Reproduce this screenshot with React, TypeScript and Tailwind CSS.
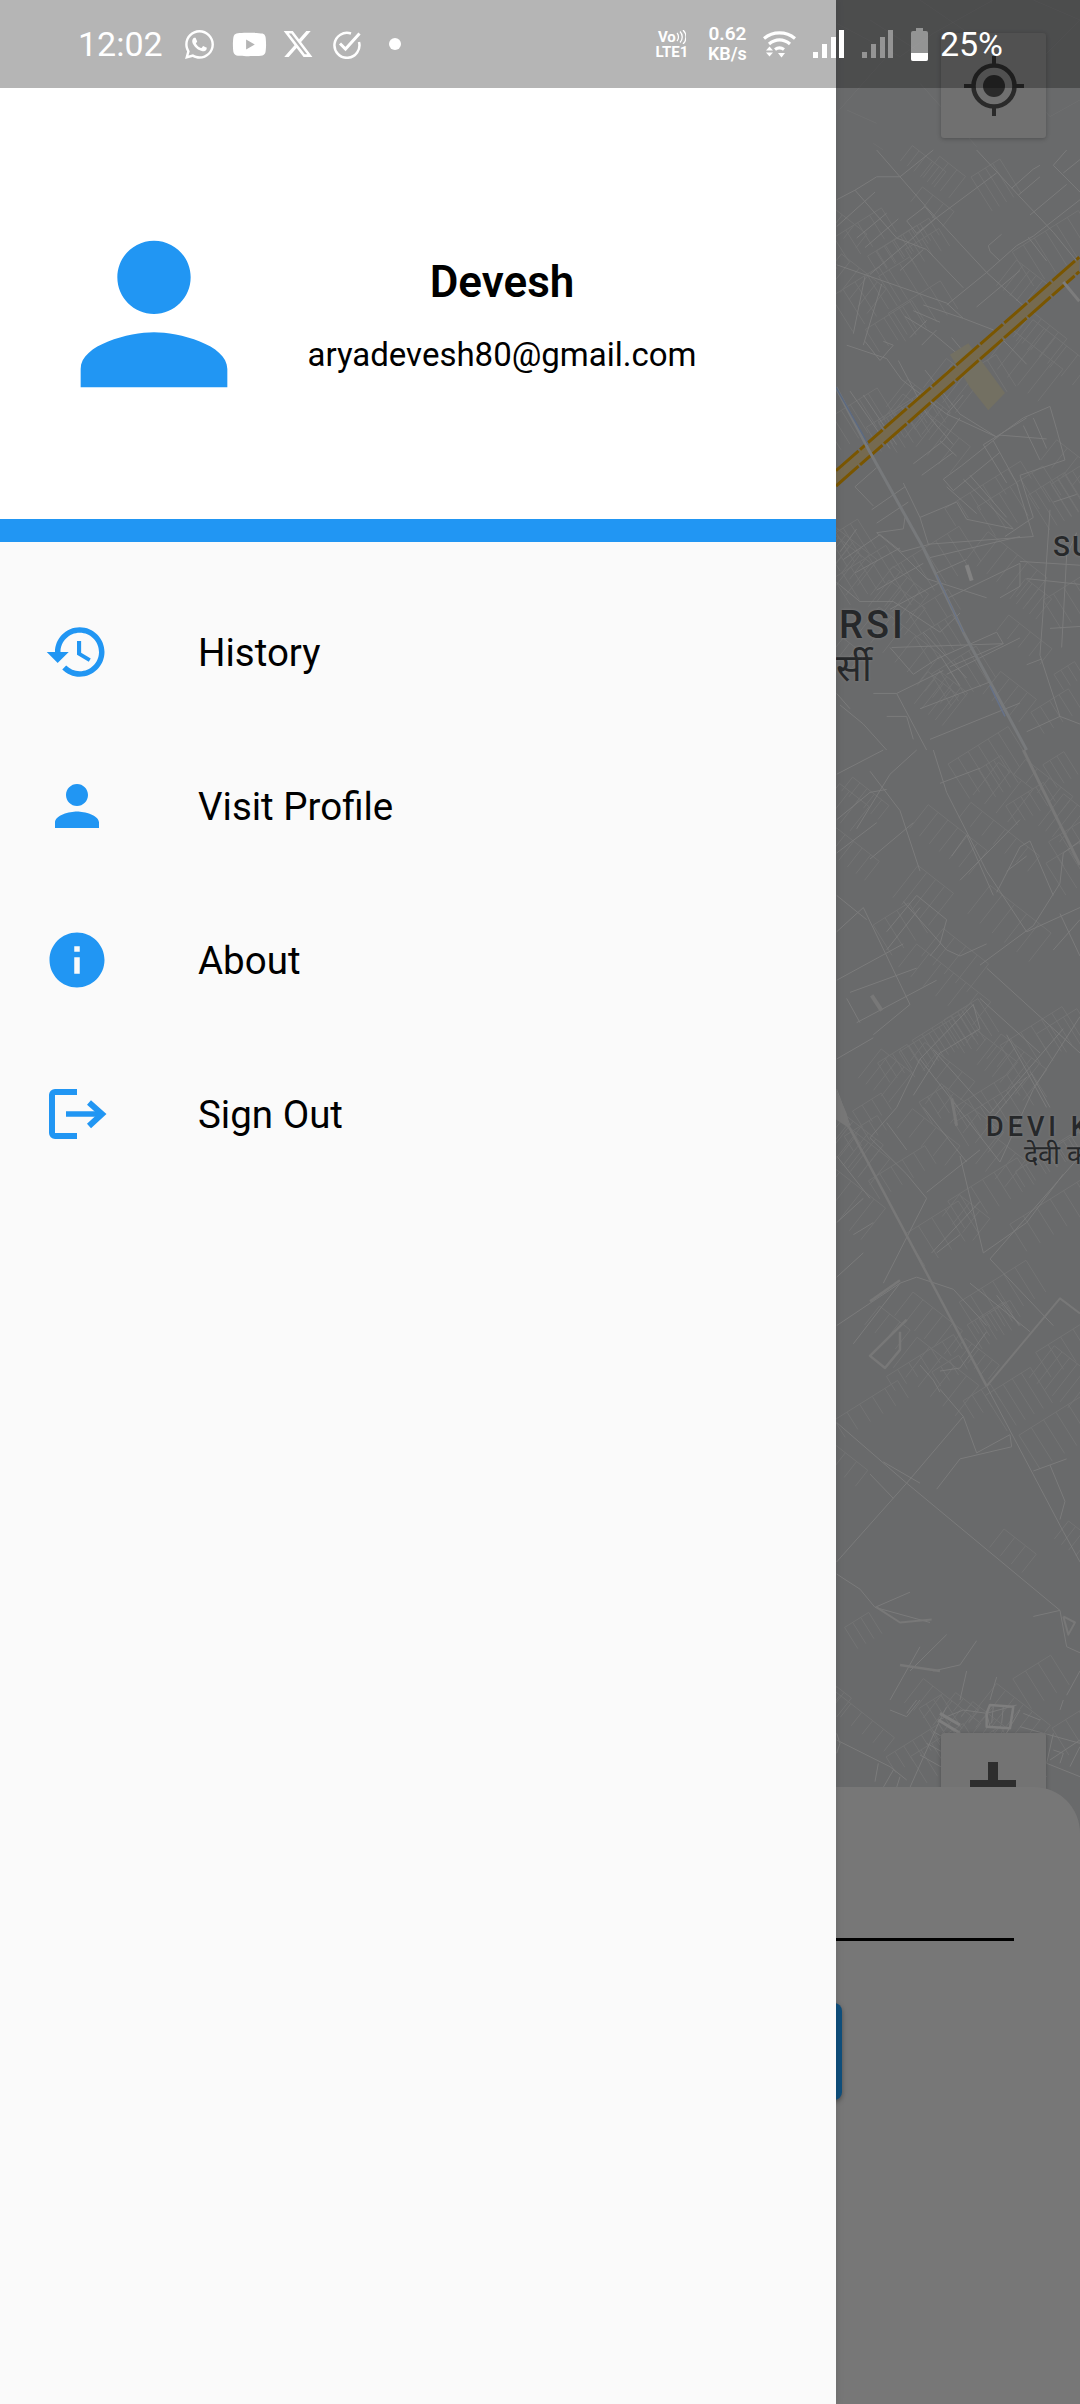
import { FaWhatsapp, FaYoutube } from "react-icons/fa";
import { FaXTwitter } from "react-icons/fa6";

const thinTop = [
  "170,0 240,70 320,150 420,245 500,320 620,415",
  "50,130 105,105 170,70 240,70 340,0",
  "105,105 230,230 320,260 430,360",
  "50,200 165,110",
  "110,230 200,165",
  "135,255 235,180",
  "150,325 265,240 345,180 530,60",
  "240,315 310,260",
  "260,185 315,148 345,180 290,218 260,185",
  "470,0 595,118 700,215 770,290",
  "575,100 640,50 660,40",
  "630,170 740,90",
  "595,118 660,70",
  "500,320 590,250 640,225 780,130",
  "505,250 545,220",
  "505,250 510,265 540,290",
  "625,228 680,290",
  "380,405 500,320",
  "470,410 600,315",
  "50,300 380,400 430,440 520,470 620,560",
  "700,40 740,0",
  "700,40 780,110",
  "730,60 780,25",
  "100,480 135,330",
  "130,510 185,350",
  "80,510 200,545 245,600 380,690 530,750",
  "255,435 340,480 450,560",
  "310,405 430,440",
  "280,420 360,450",
  "270,490 320,445",
  "305,510 350,470",
  "135,500 180,550 220,510 190,500",
  "235,550 320,690 400,770",
  "130,640 230,770",
  "315,575 420,690 530,750",
  "90,630 210,780",
  "395,490 530,630",
  "380,690 430,640",
  "280,820 370,760 420,700",
  "305,850 400,790",
  "360,760 410,800",
  "530,750 610,700 690,670 710,730 735,810 600,850",
  "600,850 640,960 555,1010",
  "490,770 620,700",
  "520,760 590,870 640,1010",
  "490,770 560,870",
  "610,720 660,810",
  "640,700 680,780",
  "425,825 540,745 680,755",
  "370,860 425,825",
  "370,860 400,890 540,790",
  "430,860 580,990",
  "450,850 560,960",
  "380,880 470,950",
  "250,870 300,960 410,920 440,965 580,990",
  "300,960 325,1030 640,1010",
  "155,940 255,880",
  "170,975 265,920",
  "105,880 170,830",
  "105,880 160,930",
  "170,1000 250,990 255,960",
  "170,1000 240,1050 320,1120 500,1170",
  "60,1050 110,990",
  "70,1070 180,1005 245,1050 330,1030",
  "105,1105 240,1040",
  "170,1150 310,1080",
  "210,1200 360,1130",
  "50,1130 120,1180 220,1180 360,1260 420,1210",
  "330,1065 600,1010",
  "350,1105 440,1070",
  "385,1170 600,1080",
  "600,1080 600,1140 540,1170",
  "600,1075 780,1085",
  "620,1120 780,1135",
  "700,920 770,900",
  "690,940 670,1200 660,1320 720,1480 780,1500",
  "770,1000 740,1060 725,1300",
  "690,1250 780,1245",
  "620,1345 665,1330",
  "215,1300 550,1290",
  "210,1300 280,1370 350,1330 530,1260 550,1290 390,1350",
  "310,1260 440,1380",
  "360,1320 420,1400",
  "380,1370 600,1275",
  "160,1420 230,1420 320,1568",
  "230,1420 370,1360",
  "300,1460 510,1390",
  "330,1540 600,1445",
  "60,1450 130,1500 200,1568",
  "200,1480 260,1480 280,1540",
  "620,1520 720,1480",
  "50,1420 90,1460",
];
const thinMid = [
  "50,40 190,0",
  "150,35 240,100 300,200",
  "50,115 150,70 200,65",
  "110,130 210,40 290,0",
  "50,170 170,120",
  "150,180 280,120",
  "340,0 380,70 500,200 620,300",
  "360,55 480,30",
  "395,175 440,140 520,240",
  "420,215 600,115",
  "560,200 620,175",
  "480,355 640,290 720,220 730,170 780,150",
  "530,235 600,160 630,150 700,240",
  "620,300 780,260",
  "700,330 780,280",
  "720,270 780,340",
  "150,640 230,590 300,510 460,420 480,460 360,500 280,570",
  "200,300 290,240 380,280 360,320 330,340",
  "200,330 300,260",
  "250,250 380,330 420,340 500,320",
  "50,300 130,260 270,420 160,470",
  "50,380 250,320",
  "90,400 290,360",
  "110,450 350,380",
  "50,510 160,475",
  "50,240 140,280",
  "50,560 90,620",
  "50,670 150,740",
  "80,410 120,450",
  "300,510 540,680 640,560 780,440",
  "340,495 510,600 730,460",
  "480,410 600,470 660,500",
  "500,360 780,500",
  "560,470 680,590",
  "630,530 690,590",
  "500,620 620,540",
  "150,640 260,700 320,740",
  "200,615 260,660",
  "310,590 440,680",
  "320,730 480,660",
  "420,670 490,830 620,780 730,700",
  "350,830 420,800",
  "335,830 480,745",
  "510,840 780,670",
  "510,840 700,950",
  "450,880 630,960",
  "530,900 600,950",
  "50,780 130,740",
  "100,800 160,780",
  "50,870 130,830",
  "50,950 240,880 290,870 400,890 500,950",
  "240,880 100,980",
  "190,880 320,740",
  "50,1110 260,1210 720,1420",
  "50,1340 260,1210 430,1100",
  "430,1100 470,1160 570,1130 575,1150 420,1170 350,1220",
  "500,1050 730,1290 780,1340",
  "190,1175 300,1210",
  "150,1195 220,1235",
  "640,1190 740,1170",
  "690,1180 735,1240 720,1270",
  "300,1015 340,1040 360,1060",
  "360,1025 420,1020 500,960",
  "360,1055 430,1100",
  "50,1360 120,1385 165,1415 330,1440",
  "165,1415 270,1390",
  "210,1568 300,1480",
  "270,1520 380,1460",
  "340,1520 420,1510 470,1470",
  "420,1568 440,1520",
  "510,1568 530,1530",
  "640,1430 720,1420 740,1480 780,1490",
  "740,1560 780,1520",
];
const thinBottom = [
  "50,100 60,130 50,160",
  "50,120 210,200 260,240",
  "175,190 165,245",
  "220,210 190,262",
  "240,230 230,262",
  "270,262 360,60 380,20",
  "300,165 380,210",
  "320,130 410,180",
  "340,95 420,140",
  "355,60 430,30 500,40 590,15",
  "210,30 260,50 300,0",
  "260,40 290,0",
  "500,40 510,80 570,85 580,30",
  "520,20 515,70",
  "550,20 545,70",
  "600,30 530,150",
  "600,80 780,130",
  "700,100 680,190 780,230",
  "700,150 730,160 720,190",
  "690,180 780,120",
  "750,200 780,140",
  "720,30 730,0",
  "610,40 660,60",
  "370,110 470,150",
  "400,190 500,230",
  "600,200 680,230",
  "770,340 780,360",
];

// Small street blocks: a spine with a ladder of side streets, as the dense map tiles have.
const blockLines: string[] = (() => {
  const out: string[] = [];
  let seed = 17;
  const rnd = () => {
    seed = (seed * 16807) % 2147483647;
    return seed / 2147483647;
  };
  for (let i = 0; i < 150; i++) {
    const cx = 836 + rnd() * 244;
    const cy = 150 + rnd() * 1620;
    if (cy > 1400 && cy < 1650 && rnd() < 0.8) continue;
    const flip = rnd() > 0.5;
    const a = ((flip ? -32 : 38) * Math.PI) / 180;
    const ux = Math.cos(a);
    const uy = Math.sin(a);
    const n = 3 + Math.floor(rnd() * 4);
    const gap = 8 + rnd() * 8;
    const len = 16 + rnd() * 26;
    const s = n * gap;
    out.push(`${cx - ux * s * 0.5},${cy - uy * s * 0.5} ${cx + ux * s * 0.5},${cy + uy * s * 0.5}`);
    for (let k = 0; k <= n; k++) {
      const px = cx + ux * (k - n / 2) * gap;
      const py = cy + uy * (k - n / 2) * gap;
      out.push(`${px},${py} ${px - uy * len},${py + ux * len}`);
    }
  }
  return out;
})();

function MapLines() {
  return (
    <svg className="absolute left-0 top-0" width="244" height="1800" viewBox="836 0 244 1800" fill="none">
      <g stroke="#7c7c7c" strokeWidth="1" opacity="0.55">
        {blockLines.map((p, i) => <polyline key={i} points={p} />)}
      </g>
      <g stroke="#808080" strokeWidth="1" opacity="0.8">
        <g transform="translate(820 150) scale(0.3333 0.3827)">
          {thinTop.map((p) => <polyline key={p} points={p} vectorEffect="non-scaling-stroke" />)}
        </g>
        <g transform="translate(820 750) scale(0.3333 0.6059)">
          {thinMid.map((p) => <polyline key={p} points={p} vectorEffect="non-scaling-stroke" />)}
        </g>
        <g transform="translate(820 1700) scale(0.3333)">
          {thinBottom.map((p) => <polyline key={p} points={p} vectorEffect="non-scaling-stroke" />)}
        </g>
        <g transform="translate(600 0) scale(0.3333)">
          <polyline points="710,70 900,170 1000,100 1180,0" />
          <polyline points="960,0 1180,150 1300,210" />
          <polyline points="860,170 700,350" />
          <polyline points="810,60 950,150" />
          <polyline points="740,330 830,370" />
          <polyline points="960,250 1130,440" />
          <polyline points="1330,170 1440,60" />
          <polyline points="1260,300 1290,280 1350,350 1440,300" />
          <polyline points="1300,0 1440,60" />
          <polyline points="820,430 850,450" />
        </g>
      </g>
      <g transform="translate(820 150) scale(0.3333 0.3827)" strokeLinejoin="round">
        <polygon points="390,535 445,505 555,635 505,680 450,620" fill="#737062" stroke="none" />
        <polygon points="48,838 778,280 778,318 48,878" fill="#756a50" />
        <polyline points="48,838 778,280" stroke="#7a5600" strokeWidth="3" strokeDasharray="30 2" vectorEffect="non-scaling-stroke" />
        <polyline points="48,878 778,318" stroke="#7a5600" strokeWidth="3" strokeDasharray="30 2" vectorEffect="non-scaling-stroke" />
        <polyline points="730,345 778,395" stroke="#7c7c7c" strokeWidth="3" vectorEffect="non-scaling-stroke" />
        <polyline points="48,620 150,790 310,1040 430,1260 620,1568" stroke="#77797b" strokeWidth="3" vectorEffect="non-scaling-stroke" />
        <polyline points="48,620 145,770" stroke="#5c6a82" strokeWidth="1.5" vectorEffect="non-scaling-stroke" />
        <polyline points="350,1110 430,1260" stroke="#66728a" strokeWidth="1" vectorEffect="non-scaling-stroke" />
        <polyline points="510,1400 555,1480" stroke="#66728a" strokeWidth="1.5" vectorEffect="non-scaling-stroke" />
        <polyline points="440,1085 455,1125" stroke="#828282" strokeWidth="4" vectorEffect="non-scaling-stroke" />
      </g>
      <g transform="translate(820 750) scale(0.3333 0.6059)" stroke="#787878" strokeLinejoin="round">
        <polyline points="610,0 780,190" strokeWidth="3" vectorEffect="non-scaling-stroke" />
        <polyline points="48,590 90,625 500,1050" strokeWidth="2.5" vectorEffect="non-scaling-stroke" />
        <polyline points="500,1050 720,905 780,930" strokeWidth="2" vectorEffect="non-scaling-stroke" />
        <polyline points="150,910 240,875" strokeWidth="2.5" vectorEffect="non-scaling-stroke" />
        <polyline points="260,940 150,1000 195,1020 240,990 240,960" strokeWidth="2.5" vectorEffect="non-scaling-stroke" />
        <polyline points="155,405 185,430" strokeWidth="4" vectorEffect="non-scaling-stroke" />
        <polyline points="395,575 410,620" strokeWidth="3" vectorEffect="non-scaling-stroke" />
        <polyline points="170,1415 240,1440 335,1435" strokeWidth="2" vectorEffect="non-scaling-stroke" />
        <polyline points="240,1510 360,1520" strokeWidth="2.5" vectorEffect="non-scaling-stroke" />
        <polyline points="730,1430 765,1440 745,1460 730,1430" strokeWidth="2" vectorEffect="non-scaling-stroke" />
        <polygon points="48,560 48,610 90,625 80,600" fill="#777777" stroke="none" />
      </g>
      <g transform="translate(820 1700) scale(0.3333)" stroke="#7e7e7e" strokeLinejoin="round" fill="none">
        <polyline points="355,60 420,100" strokeWidth="3" vectorEffect="non-scaling-stroke" />
        <polyline points="360,40 420,75" strokeWidth="3" vectorEffect="non-scaling-stroke" />
        <polyline points="500,40 500,80 570,85 580,20 510,15 500,40" strokeWidth="2.5" vectorEffect="non-scaling-stroke" />
      </g>
    </svg>
  );
}

function MaterialIcon({ d }: { d: string }) {
  return (
    <svg width="66" height="66" viewBox="0 0 24 24" fill="#2196f3">
      <path d={d} />
    </svg>
  );
}

const historyPath =
  "M13 3c-4.97 0-9 4.03-9 9H1l3.89 3.89.07.14L9 12H6c0-3.87 3.13-7 7-7s7 3.13 7 7-3.13 7-7 7c-1.93 0-3.68-.79-4.94-2.06l-1.42 1.42C8.27 19.99 10.51 21 13 21c4.97 0 9-4.03 9-9s-4.03-9-9-9zm-1 5v5l4.28 2.54.72-1.21-3.5-2.08V8H12z";
const personPath =
  "M12 12c2.21 0 4-1.79 4-4s-1.79-4-4-4-4 1.79-4 4 1.79 4 4 4zm0 2c-2.67 0-8 1.34-8 4v2h16v-2c0-2.66-5.33-4-8-4z";
const infoPath =
  "M12 2C6.48 2 2 6.48 2 12s4.48 10 10 10 10-4.48 10-10S17.52 2 12 2zm1 15h-2v-6h2v6zm0-8h-2V7h2v2z";

function SignOutIcon() {
  return (
    <svg width="66" height="66" viewBox="0 0 66 66" fill="none" stroke="#2196f3">
      <path d="M33 11H11a3 3 0 0 0-3 3V52a3 3 0 0 0 3 3H33" strokeWidth="6" />
      <path d="M22 33H57" strokeWidth="5.5" />
      <path d="M45 21.5L58 33L45 45" strokeWidth="6" />
    </svg>
  );
}

function Row({ icon, label }: { icon: React.ReactNode; label: string }) {
  return (
    <div className="flex h-[154px] items-center pl-[44px]">
      <div className="flex h-[66px] w-[66px] items-center justify-center">{icon}</div>
      <span className="ml-[88px] mt-[2px] text-[38.5px] text-black">{label}</span>
    </div>
  );
}

function Signal({ opacity }: { opacity: string }) {
  return (
    <svg width="31" height="28" viewBox="0 0 31 28" fill="#fff" className={opacity}>
      <rect x="0" y="22" width="5" height="6" />
      <rect x="9" y="14" width="5" height="14" />
      <rect x="18" y="7" width="5" height="21" />
      <rect x="26" y="0" width="5" height="28" />
    </svg>
  );
}

function StatusBar() {
  return (
    <div className="absolute inset-x-0 top-0 flex h-[88px] items-center justify-between bg-black/[0.275] pl-[78px] pr-[77px] text-white">
      <div className="flex items-center">
        <span className="text-[34px] leading-none">12:02</span>
        <FaWhatsapp className="ml-[20px]" size={33} />
        <FaYoutube className="ml-[16px]" size={35} />
        <FaXTwitter className="ml-[15px]" size={32} />
        <svg className="ml-[18px]" width="29" height="29" viewBox="0 0 29 29" fill="none" stroke="#fff" strokeWidth="2.5">
          <path d="M19 3.5A12.5 12.5 0 1 0 27 12" />
          <path d="M8 13.5l5.5 5.5L27.5 3.5" strokeWidth="3" />
        </svg>
        <span className="ml-[28px] h-[12px] w-[12px] rounded-full bg-white" />
      </div>
      <div className="flex items-center">
        <div className="flex w-[36px] flex-col items-center font-bold leading-none">
          <div className="flex items-center text-[15px] leading-[15px]">
            Vo
            <svg width="10" height="14" viewBox="0 0 10 14" fill="none" stroke="#fff" strokeWidth="1.3">
              <path d="M1 3c2 2 2 6 0 8M4 1.5c3 3 3 8 0 11M7 0c4 4 4 10 0 14" />
            </svg>
          </div>
          <span className="text-[15px] leading-[14px]">LTE1</span>
        </div>
        <div className="ml-[17px] flex w-[41px] flex-col items-center text-[19px] font-semibold leading-[20px]">
          <span>0.62</span>
          <span className="text-[18px]">KB/s</span>
        </div>
        <svg className="ml-[15px]" width="33" height="28" viewBox="0 0 33 28" fill="none" stroke="#fff" strokeWidth="3.2">
          <path d="M1 8.5C10 1 23 1 32 8.5" />
          <path d="M6 14C12.5 8.5 20.5 8.5 27 14" />
          <path d="M12 19.5C15 17.2 18 17.2 21 19.5" />
          <path d="M3 20.5l3.5-4 3.5 4zM3 22.5l3.5 4 3.5-4z" fill="#fff" stroke="none" />
          <path d="M15 23h7l-3.5 4.5z" fill="#fff" stroke="none" />
        </svg>
        <Signal opacity="ml-[17px]" />
        <Signal opacity="ml-[18px] opacity-40" />
        <svg className="ml-[18px]" width="17" height="33" viewBox="0 0 17 33" fill="#fff">
          <path d="M5 0h7v3h3a2 2 0 0 1 2 2v26a2 2 0 0 1-2 2H2a2 2 0 0 1-2-2V5a2 2 0 0 1 2-2h3z" opacity="0.4" />
          <path d="M0 25h17v6a2 2 0 0 1-2 2H2a2 2 0 0 1-2-2z" />
        </svg>
        <span className="ml-[12px] text-[34px] leading-none">25%</span>
      </div>
    </div>
  );
}

function MapPanel() {
  const label = "absolute whitespace-nowrap font-medium text-[#26282a] [text-shadow:0_0_3px_#808080]";
  return (
    <div className="relative min-w-0 flex-1 overflow-hidden bg-[#696a6b]">
      <MapLines />
      <span className={`${label} left-[3px] top-[606px] text-[38px] leading-[38px] tracking-[3px]`}>RSI</span>
      <span className={`${label} left-0 top-[645px] text-[38px] leading-[46px]`}>र्सी</span>
      <span className={`${label} left-[217px] top-[529px] text-[28px] leading-[36px] tracking-[2px]`}>SU</span>
      <span className={`${label} left-[150px] top-[1110px] text-[27px] leading-[34px] tracking-[4px]`}>DEVI K</span>
      <span className={`${label} left-[188px] top-[1137px] text-[27px] leading-[36px]`}>देवी क</span>

      <div className="absolute left-[105px] top-[33px] flex h-[105px] w-[105px] items-center justify-center rounded-[3px] bg-[#707070] shadow-[0_1px_4px_rgba(0,0,0,0.25)]">
        <svg width="60" height="60" viewBox="0 0 60 60" fill="none" stroke="#2a2a2a">
          <circle cx="30" cy="30" r="20.5" strokeWidth="4.5" />
          <circle cx="30" cy="30" r="11" fill="#2a2a2a" stroke="none" />
          <path d="M30 0V10M30 50V60M0 30H10M50 30H60" strokeWidth="4" />
        </svg>
      </div>

      <div className="absolute left-[105px] top-[1733px] h-[105px] w-[105px] rounded-[3px] bg-[#737373] shadow-[0_1px_4px_rgba(0,0,0,0.25)]">
        <div className="absolute left-[47px] top-[29px] h-[46px] w-[10px] bg-[#2e2e2e]" />
        <div className="absolute left-[29px] top-[47px] h-[10px] w-[46px] bg-[#2e2e2e]" />
      </div>

      <div className="absolute inset-x-0 bottom-0 top-[1787px] rounded-tr-[46px] bg-[#777777]">
        <div className="absolute left-0 top-[151px] h-[3px] w-[178px] bg-black" />
      </div>
      <div className="absolute left-[-10px] top-[2003px] h-[97px] w-[16px] rounded-[10px] bg-[#0f4f7c] shadow-[0_2px_5px_rgba(0,0,0,0.35)]" />
    </div>
  );
}

export default function App() {
  return (
    <div className="relative flex h-[2404px] w-[1080px] overflow-hidden font-['Roboto',sans-serif]">
      <div className="z-10 flex w-[836px] shrink-0 flex-col bg-[#fafafa] shadow-[0_0_8px_rgba(0,0,0,0.12)]">
        <div className="mt-[88px] flex h-[431px] shrink-0 bg-white pl-[44px] pt-[116px]">
          <div className="flex h-[220px] w-[220px] shrink-0">
            <svg width="220" height="220" viewBox="0 0 24 24" fill="#2196f3">
              <path d={personPath} />
            </svg>
          </div>
          <div className="ml-[8px] mt-[46px] flex w-[460px] flex-col items-center">
            <span className="text-[44px] font-semibold leading-[64px] text-black">Devesh</span>
            <span className="mt-[17px] text-[33px] leading-[48px] text-black">aryadevesh80@gmail.com</span>
          </div>
        </div>
        <div className="h-[23px] shrink-0 bg-[#2196f3]" />
        <div className="pt-[33px]">
          <Row icon={<MaterialIcon d={historyPath} />} label="History" />
          <Row icon={<MaterialIcon d={personPath} />} label="Visit Profile" />
          <Row icon={<MaterialIcon d={infoPath} />} label="About" />
          <Row icon={<SignOutIcon />} label="Sign Out" />
        </div>
      </div>
      <MapPanel />
      <div className="absolute inset-0 z-20 h-[88px]">
        <StatusBar />
      </div>
    </div>
  );
}
